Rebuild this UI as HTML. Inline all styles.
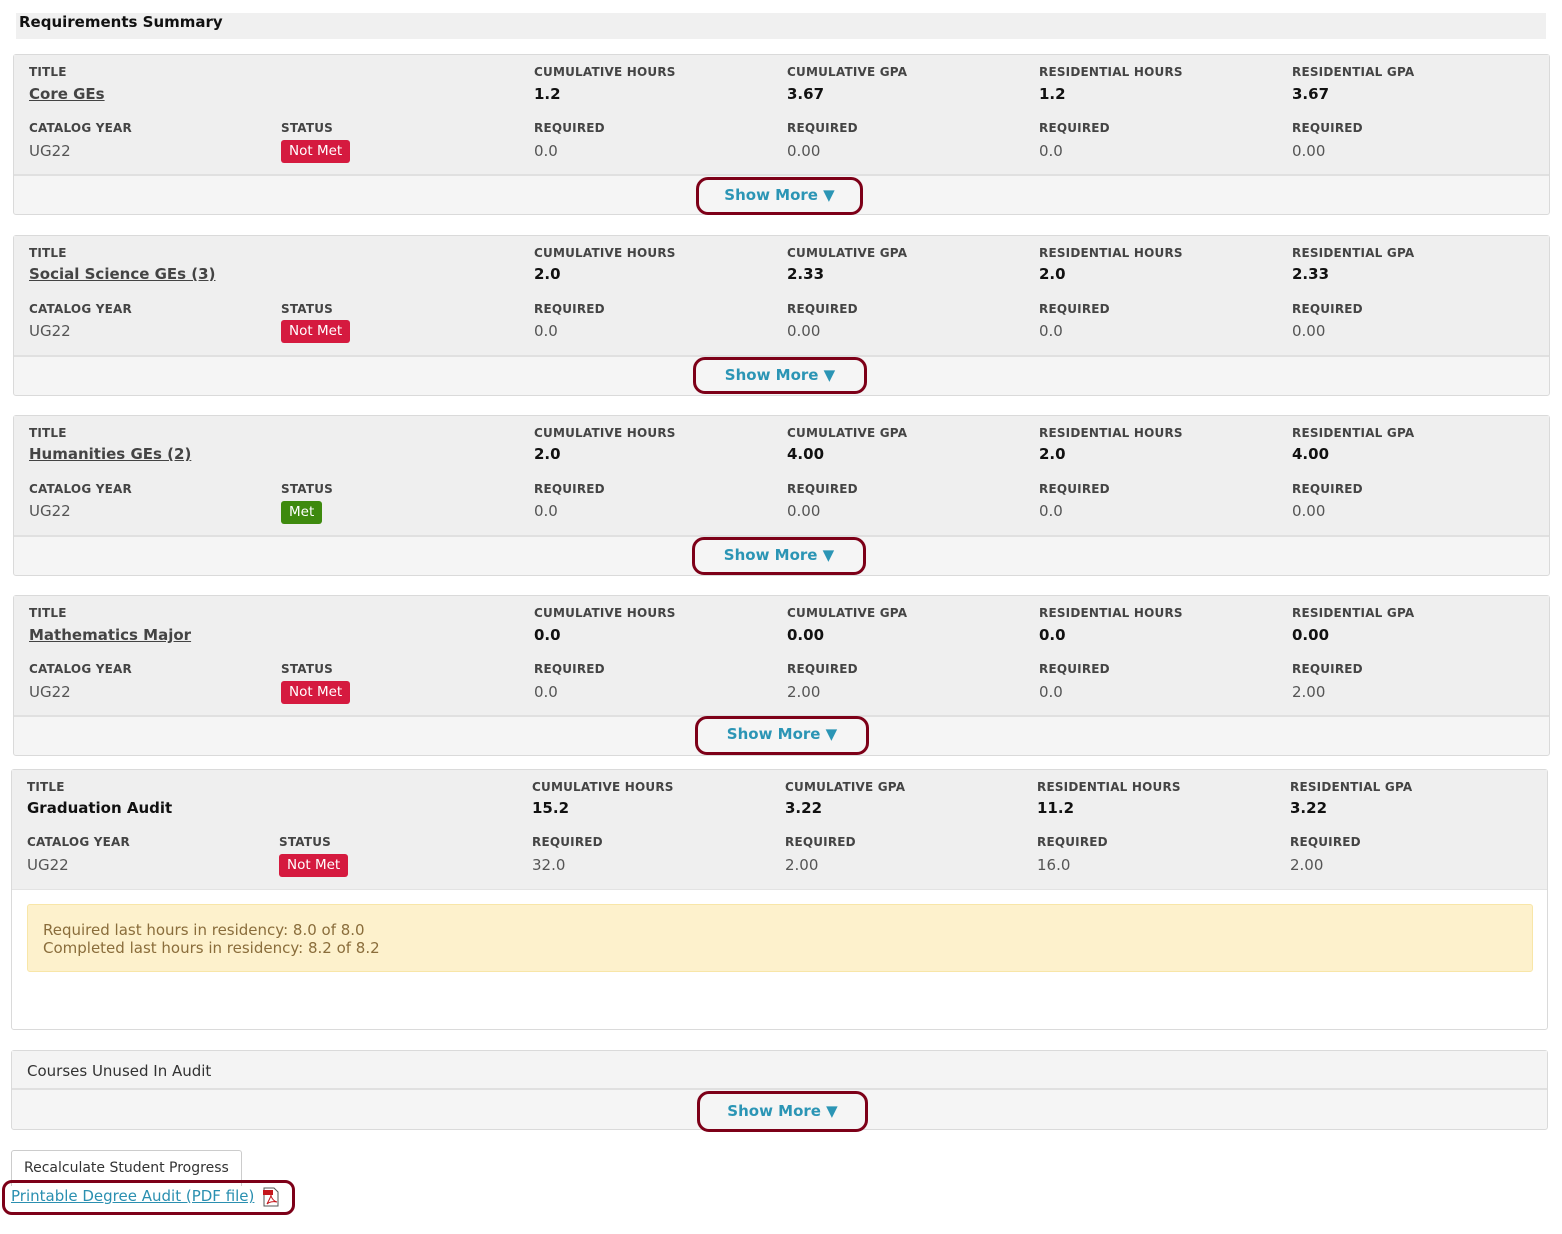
<!DOCTYPE html>
<html><head><meta charset="utf-8"><style>
*{margin:0;padding:0;box-sizing:border-box}
body{width:1562px;height:1234px;background:#fff;font-family:"DejaVu Sans","Liberation Sans",sans-serif;position:relative;overflow:hidden;color:#444}
.a{position:absolute;white-space:nowrap;line-height:18px}
.hdr{position:absolute;left:16px;top:13px;width:1530px;height:26px;background:#f0f0f0;font-weight:bold;font-size:15px;color:#111;padding:0 0 0 3px;line-height:18px}
.card{position:absolute;border:1px solid #dadada;border-radius:3px;background:#f5f5f5}
.top{position:absolute;left:0;top:0;right:0;height:121px;background:#efefef;border-bottom:2px solid #e0e0e0}
.lb{font-size:12px;font-weight:bold;color:#444;letter-spacing:.2px}
.vb{font-size:15px;font-weight:bold;color:#111}
.vr{font-size:15px;color:#555}
.tl{font-size:15px;font-weight:bold;color:#444;text-decoration:underline}
.badge{position:absolute;height:23px;border-radius:3px;color:#fff;font-size:13.5px;line-height:23px;padding:0 8px}
.nm{background:#d51a3f}
.mt{background:#3e8a0e}
.oval{position:absolute;border:3px solid #7d0018;border-radius:12px;color:#2b95b5;font-weight:bold;font-size:15px;text-align:center;line-height:31px}
</style></head><body>
<div class="hdr">Requirements Summary</div>

<div class="card" style="left:13px;top:54px;width:1537px;height:161px"><div class="top"></div>
<div class="a lb" style="left:15px;top:8px">TITLE</div>
<div class="a tl" style="left:15px;top:30px">Core GEs</div>
<div class="a lb" style="left:15px;top:64px">CATALOG YEAR</div>
<div class="a vr" style="left:15px;top:87px">UG22</div>
<div class="a lb" style="left:267px;top:64px">STATUS</div>
<div class="badge nm" style="left:267px;top:85px">Not Met</div>
<div class="a lb" style="left:520px;top:8px">CUMULATIVE HOURS</div><div class="a vb" style="left:520px;top:30px">1.2</div><div class="a lb" style="left:520px;top:64px">REQUIRED</div><div class="a vr" style="left:520px;top:87px">0.0</div>
<div class="a lb" style="left:773px;top:8px">CUMULATIVE GPA</div><div class="a vb" style="left:773px;top:30px">3.67</div><div class="a lb" style="left:773px;top:64px">REQUIRED</div><div class="a vr" style="left:773px;top:87px">0.00</div>
<div class="a lb" style="left:1025px;top:8px">RESIDENTIAL HOURS</div><div class="a vb" style="left:1025px;top:30px">1.2</div><div class="a lb" style="left:1025px;top:64px">REQUIRED</div><div class="a vr" style="left:1025px;top:87px">0.0</div>
<div class="a lb" style="left:1278px;top:8px">RESIDENTIAL GPA</div><div class="a vb" style="left:1278px;top:30px">3.67</div><div class="a lb" style="left:1278px;top:64px">REQUIRED</div><div class="a vr" style="left:1278px;top:87px">0.00</div>
</div>
<div class="oval" style="left:696px;top:177px;width:167px;height:38px">Show More ▼</div>

<div class="card" style="left:13px;top:235px;width:1537px;height:161px"><div class="top"></div>
<div class="a lb" style="left:15px;top:8px">TITLE</div>
<div class="a tl" style="left:15px;top:29px">Social Science GEs (3)</div>
<div class="a lb" style="left:15px;top:64px">CATALOG YEAR</div>
<div class="a vr" style="left:15px;top:86px">UG22</div>
<div class="a lb" style="left:267px;top:64px">STATUS</div>
<div class="badge nm" style="left:267px;top:84px">Not Met</div>
<div class="a lb" style="left:520px;top:8px">CUMULATIVE HOURS</div><div class="a vb" style="left:520px;top:29px">2.0</div><div class="a lb" style="left:520px;top:64px">REQUIRED</div><div class="a vr" style="left:520px;top:86px">0.0</div>
<div class="a lb" style="left:773px;top:8px">CUMULATIVE GPA</div><div class="a vb" style="left:773px;top:29px">2.33</div><div class="a lb" style="left:773px;top:64px">REQUIRED</div><div class="a vr" style="left:773px;top:86px">0.00</div>
<div class="a lb" style="left:1025px;top:8px">RESIDENTIAL HOURS</div><div class="a vb" style="left:1025px;top:29px">2.0</div><div class="a lb" style="left:1025px;top:64px">REQUIRED</div><div class="a vr" style="left:1025px;top:86px">0.0</div>
<div class="a lb" style="left:1278px;top:8px">RESIDENTIAL GPA</div><div class="a vb" style="left:1278px;top:29px">2.33</div><div class="a lb" style="left:1278px;top:64px">REQUIRED</div><div class="a vr" style="left:1278px;top:86px">0.00</div>
</div>
<div class="oval" style="left:693px;top:357px;width:174px;height:37px">Show More ▼</div>

<div class="card" style="left:13px;top:415px;width:1537px;height:161px"><div class="top"></div>
<div class="a lb" style="left:15px;top:8px">TITLE</div>
<div class="a tl" style="left:15px;top:29px">Humanities GEs (2)</div>
<div class="a lb" style="left:15px;top:64px">CATALOG YEAR</div>
<div class="a vr" style="left:15px;top:86px">UG22</div>
<div class="a lb" style="left:267px;top:64px">STATUS</div>
<div class="badge mt" style="left:267px;top:85px">Met</div>
<div class="a lb" style="left:520px;top:8px">CUMULATIVE HOURS</div><div class="a vb" style="left:520px;top:29px">2.0</div><div class="a lb" style="left:520px;top:64px">REQUIRED</div><div class="a vr" style="left:520px;top:86px">0.0</div>
<div class="a lb" style="left:773px;top:8px">CUMULATIVE GPA</div><div class="a vb" style="left:773px;top:29px">4.00</div><div class="a lb" style="left:773px;top:64px">REQUIRED</div><div class="a vr" style="left:773px;top:86px">0.00</div>
<div class="a lb" style="left:1025px;top:8px">RESIDENTIAL HOURS</div><div class="a vb" style="left:1025px;top:29px">2.0</div><div class="a lb" style="left:1025px;top:64px">REQUIRED</div><div class="a vr" style="left:1025px;top:86px">0.0</div>
<div class="a lb" style="left:1278px;top:8px">RESIDENTIAL GPA</div><div class="a vb" style="left:1278px;top:29px">4.00</div><div class="a lb" style="left:1278px;top:64px">REQUIRED</div><div class="a vr" style="left:1278px;top:86px">0.00</div>
</div>
<div class="oval" style="left:692px;top:537px;width:174px;height:38px">Show More ▼</div>

<div class="card" style="left:13px;top:595px;width:1537px;height:161px"><div class="top"></div>
<div class="a lb" style="left:15px;top:8px">TITLE</div>
<div class="a tl" style="left:15px;top:30px">Mathematics Major</div>
<div class="a lb" style="left:15px;top:64px">CATALOG YEAR</div>
<div class="a vr" style="left:15px;top:87px">UG22</div>
<div class="a lb" style="left:267px;top:64px">STATUS</div>
<div class="badge nm" style="left:267px;top:85px">Not Met</div>
<div class="a lb" style="left:520px;top:8px">CUMULATIVE HOURS</div><div class="a vb" style="left:520px;top:30px">0.0</div><div class="a lb" style="left:520px;top:64px">REQUIRED</div><div class="a vr" style="left:520px;top:87px">0.0</div>
<div class="a lb" style="left:773px;top:8px">CUMULATIVE GPA</div><div class="a vb" style="left:773px;top:30px">0.00</div><div class="a lb" style="left:773px;top:64px">REQUIRED</div><div class="a vr" style="left:773px;top:87px">2.00</div>
<div class="a lb" style="left:1025px;top:8px">RESIDENTIAL HOURS</div><div class="a vb" style="left:1025px;top:30px">0.0</div><div class="a lb" style="left:1025px;top:64px">REQUIRED</div><div class="a vr" style="left:1025px;top:87px">0.0</div>
<div class="a lb" style="left:1278px;top:8px">RESIDENTIAL GPA</div><div class="a vb" style="left:1278px;top:30px">0.00</div><div class="a lb" style="left:1278px;top:64px">REQUIRED</div><div class="a vr" style="left:1278px;top:87px">2.00</div>
</div>
<div class="oval" style="left:695px;top:716px;width:174px;height:39px">Show More ▼</div>

<div class="card" style="left:11px;top:769px;width:1537px;height:261px;background:#fff"><div class="top" style="height:120px;border-bottom:1px solid #e3e3e3"></div>
<div class="a lb" style="left:15px;top:8px">TITLE</div>
<div class="a vb" style="left:15px;top:29px;color:#111">Graduation Audit</div>
<div class="a lb" style="left:15px;top:63px">CATALOG YEAR</div>
<div class="a vr" style="left:15px;top:86px">UG22</div>
<div class="a lb" style="left:267px;top:63px">STATUS</div>
<div class="badge nm" style="left:267px;top:84px">Not Met</div>
<div class="a lb" style="left:520px;top:8px">CUMULATIVE HOURS</div><div class="a vb" style="left:520px;top:29px">15.2</div><div class="a lb" style="left:520px;top:63px">REQUIRED</div><div class="a vr" style="left:520px;top:86px">32.0</div>
<div class="a lb" style="left:773px;top:8px">CUMULATIVE GPA</div><div class="a vb" style="left:773px;top:29px">3.22</div><div class="a lb" style="left:773px;top:63px">REQUIRED</div><div class="a vr" style="left:773px;top:86px">2.00</div>
<div class="a lb" style="left:1025px;top:8px">RESIDENTIAL HOURS</div><div class="a vb" style="left:1025px;top:29px">11.2</div><div class="a lb" style="left:1025px;top:63px">REQUIRED</div><div class="a vr" style="left:1025px;top:86px">16.0</div>
<div class="a lb" style="left:1278px;top:8px">RESIDENTIAL GPA</div><div class="a vb" style="left:1278px;top:29px">3.22</div><div class="a lb" style="left:1278px;top:63px">REQUIRED</div><div class="a vr" style="left:1278px;top:86px">2.00</div>
<div style="position:absolute;left:15px;top:134px;width:1506px;height:68px;background:#fdf1cc;border:1px solid #f8e6a8;border-radius:3px;color:#8a6d3b;font-size:15px;line-height:18px;padding:16px 0 0 15px;white-space:nowrap">Required last hours in residency: 8.0 of 8.0<br>Completed last hours in residency: 8.2 of 8.2</div>
</div>

<div class="card" style="left:11px;top:1050px;width:1537px;height:80px"><div style="position:absolute;left:0;right:0;top:0;height:39px;background:#f4f4f4;border-bottom:2px solid #e0e0e0"></div>
<div class="a" style="left:15px;top:11px;font-size:15px;color:#333">Courses Unused In Audit</div></div>
<div class="oval" style="left:697px;top:1091px;width:171px;height:41px;line-height:35px">Show More ▼</div>

<div style="position:absolute;left:11px;top:1150px;width:231px;height:36px;border:1px solid #ccc;border-bottom:none;border-radius:3px 3px 0 0;background:#fff;font-size:14px;color:#333;line-height:34px;padding-left:12px;white-space:nowrap">Recalculate Student Progress</div>
<div style="position:absolute;left:2px;top:1180px;width:293px;height:35px;border:3px solid #7d0018;border-radius:10px"></div>
<div class="a" style="left:11px;top:1187px;font-size:15px;color:#2a8fb0;text-decoration:underline">Printable Degree Audit (PDF file)</div>
<svg style="position:absolute;left:262px;top:1187px" width="18" height="20" viewBox="0 0 18 20"><path d="M2 1h10l4 4v14H2z" fill="#fff" stroke="#555"/><rect x="1" y="3" width="10" height="5" fill="#c4161c"/><path d="M5 17c3-6 5-9 4-11-1 3 2 8 6 9-4-1-8 0-10 2z" fill="none" stroke="#c4161c"/></svg>
</body></html>
